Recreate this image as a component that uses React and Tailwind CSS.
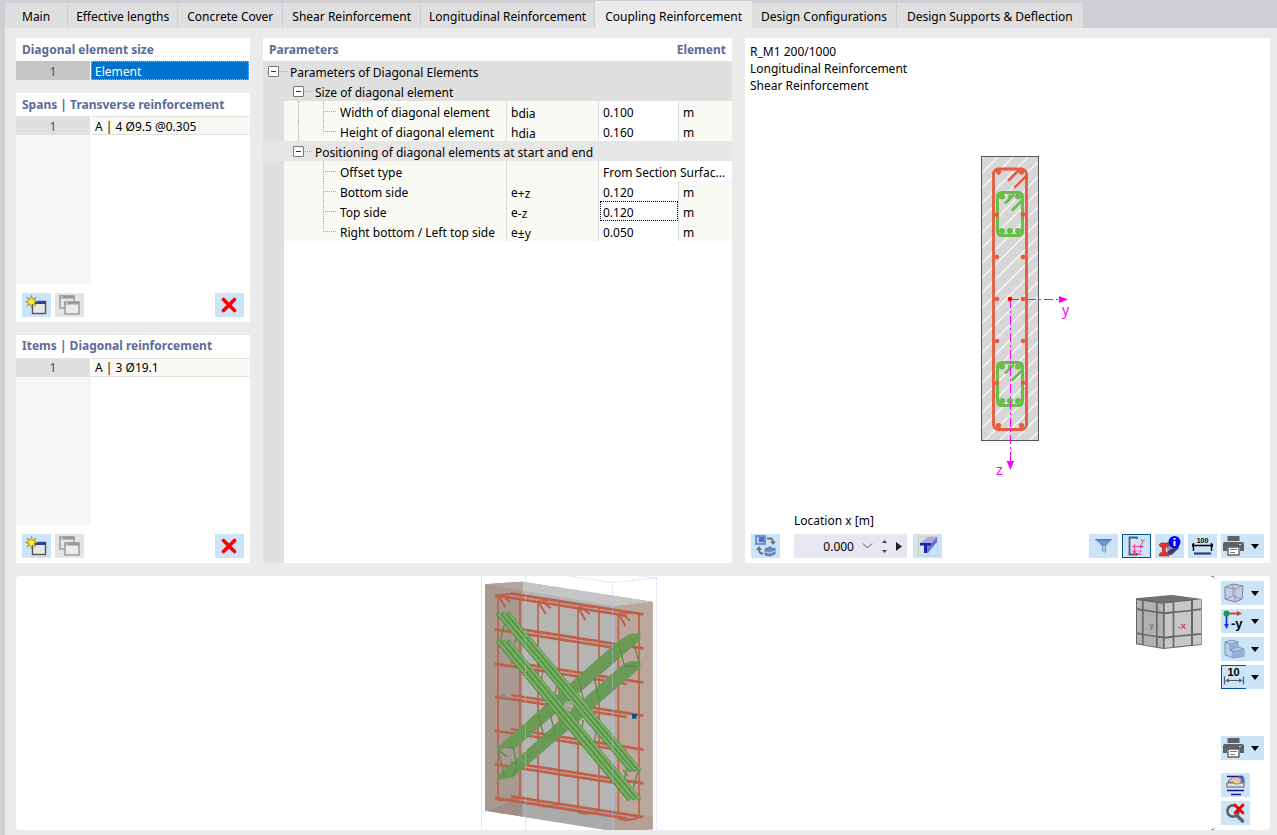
import React from 'react';
import clsx from 'clsx';

const TABS = [
  { label: 'Main', pad: 'px-[17px]' },
  { label: 'Effective lengths', pad: 'px-2' },
  { label: 'Concrete Cover', pad: 'px-[9px]' },
  { label: 'Shear Reinforcement', pad: 'px-[9px]' },
  { label: 'Longitudinal Reinforcement', pad: 'px-2' },
  { label: 'Coupling Reinforcement', pad: 'px-[10px]', active: true },
  { label: 'Design Configurations', pad: 'px-[9px]' },
  { label: 'Design Supports & Deflection', pad: 'px-[10px]' },
];

const GROUPS = [
  {
    label: 'Size of diagonal element',
    shade: 'bg-[#e0e0e0]',
    rows: [
      { label: 'Width of diagonal element', symbol: 'b', sub: 'dia', value: '0.100', unit: 'm' },
      { label: 'Height of diagonal element', symbol: 'h', sub: 'dia', value: '0.160', unit: 'm' },
    ],
  },
  {
    label: 'Positioning of diagonal elements at start and end',
    shade: 'bg-[#e6e6e6]',
    rows: [
      { label: 'Offset type', value: 'From Section Surfac...', wide: true },
      { label: 'Bottom side', symbol: 'e', sub: '+z', value: '0.120', unit: 'm' },
      { label: 'Top side', symbol: 'e', sub: '-z', value: '0.120', unit: 'm', active: true },
      { label: 'Right bottom / Left top side', symbol: 'e', sub: '±y', value: '0.050', unit: 'm' },
    ],
  },
];

/* ---------- icons ---------- */

const NewIcon = () => (
  <svg width="23" height="20" viewBox="0 0 23 20">
    <rect x="7.5" y="6.5" width="13" height="12" fill="#e8e8e8" stroke="#555" strokeWidth="1.4" />
    <rect x="7" y="6" width="14" height="3" fill="#2f3f9f" />
    <path d="M6.500 0.500l1 3.800 3.500-2-2 3.300 3.500 1-3.500 1 2 3.400-3.500-2-1 3.500-1-3.500-3.500 2 2-3.400-3.500-1 3.500-1-2-3.300 3.500 2z" fill="#fff020" stroke="#8a8420" strokeWidth=".7" />
  </svg>
);

const CopyIcon = () => (
  <svg width="21" height="20" viewBox="0 0 21 20">
    <rect x="1" y="1" width="14" height="12" fill="#e6e6e6" stroke="#999" strokeWidth="1.400" />
    <rect x="0.500" y="0.500" width="15" height="3" fill="#999" />
    <rect x="6" y="7" width="14" height="12" fill="#ececec" stroke="#999" strokeWidth="1.400" />
    <rect x="5.500" y="6.500" width="15" height="3" fill="#999" />
    <path d="M2 2h1.500M7 8h1.500" stroke="#fff" />
  </svg>
);

const DeleteIcon = () => (
  <svg width="17" height="16" viewBox="0 0 17 16">
    <path d="M2.500 2.500l11 11M13.500 2.500l-11 11" stroke="#fe0000" strokeWidth="3.600" strokeLinecap="round" />
  </svg>
);

const SwapIcon = () => (
  <svg width="22" height="22" viewBox="0 0 22 22">
    <rect x="1" y="1" width="9" height="8" fill="#b9cff5" stroke="#5b84cf" strokeWidth="1.600" />
    <rect x="4" y="2" width="5" height="5" fill="#4a73c8" />
    <path d="M12 3.500h3q3 0 3 4" fill="none" stroke="#66707c" strokeWidth="1.800" />
    <path d="M15 6.500h6L18 10z" fill="#66707c" />
    <path d="M8 18.500H7q-3 0-3-5" fill="none" stroke="#66707c" strokeWidth="1.800" />
    <path d="M1 15h6l-3-4z" fill="#66707c" />
    <path d="M10 14l6-2.500V14l4-1v6l-5 2-5-1z" fill="#6c8cc0" stroke="#4c6795" strokeWidth=".8" />
    <path d="M10 17l5 1 5-2" stroke="#c5d6f0" fill="none" />
  </svg>
);

const BeamIcon = () => (
  <svg width="22" height="22" viewBox="0 0 22 22">
    <rect x="1.500" y="1.500" width="19" height="19" fill="none" stroke="#edc9a0" />
    <path d="M3 8l8-6h9l-6 6z" fill="#a7a8ee" />
    <path d="M14 8l6-6v5l-9 11h-1v-8h4z" fill="#6d72d8" />
    <path d="M3 8h11v2.500h-4V18H7v-7.500H3z" fill="#22229a" />
  </svg>
);

const FunnelIcon = () => (
  <svg width="20" height="18" viewBox="0 0 20 18">
    <path d="M1 2h17l-6 7v7l-4-2V9z" fill="#6f96c4" />
    <path d="M9 9h2v6l-2-1z" fill="#b3cbe6" />
    <path d="M1 2h17l-1 1.500H2z" fill="#4f7cb0" />
  </svg>
);

const AxesIcon = () => (
  <svg width="21" height="20" viewBox="0 0 21 20">
    <path d="M11 3V1.500H3.500v17H11V17" fill="none" stroke="#575a72" strokeWidth="1.800" />
    <path d="M6 10.500h9M8.500 8v8" stroke="#ee4f93" fill="none" strokeWidth="1.200" />
    <path d="M14 8l4 2.500-4 2.500zM6 14.500h5L8.500 19z" fill="#ee4f93" />
    <path d="M15 3l1.500 3M18.500 3l-3 5M12 15h3.500L12 18.500h4" stroke="#ee4f93" fill="none" />
  </svg>
);

const InfoBeamIcon = () => (
  <svg width="23" height="22" viewBox="0 0 23 22">
    <path d="M8 8l7-4 6 4v5l-7 7h-4z" fill="#8492bd" />
    <path d="M9 17l9-6 3 2-8 7z" fill="#343f70" />
    <path d="M1.500 9l2-1h6l1 1v2L7.300 12.500V17l3.700 1.500V21H1.500v-2.500L4.500 17v-4.500L1.500 11z" fill="#f03030" stroke="#8c1515" strokeWidth=".6" />
    <circle cx="16.500" cy="7" r="6" fill="#0000fb" />
    <path d="M16.500 6v5M16.500 3v1.800" stroke="#fff" strokeWidth="2" />
  </svg>
);

const DimensionIcon = () => (
  <svg width="23" height="20" viewBox="0 0 23 20">
    <text x="11.500" y="7" textAnchor="middle" fontSize="7" fontWeight="700" fontFamily="Liberation Sans, sans-serif">100</text>
    <path d="M2.500 7v8M20.500 7v8M3 9.500h17" stroke="#000" strokeWidth="1.400" />
    <path d="M1 8l4 1.500L1 11zM22 8l-4 1.500L22 11z" />
    <path d="M3 17.500h17" stroke="#343c7c" strokeWidth="2.200" />
  </svg>
);

const PrinterIcon = () => (
  <svg width="21" height="20" viewBox="0 0 21 20">
    <path d="M4.500 0h12v5h-12z" fill="#606164" />
    <path d="M2 6h17q2 0 2 2v7h-4v-4H4v4H0V8q0-2 2-2z" fill="#606164" />
    <path d="M5 11h11v8H5z" fill="#fff" stroke="#606164" strokeWidth="1.400" />
    <path d="M7 13.500h7M7 16.500h5" stroke="#777" />
    <path d="M16 8.500h2" stroke="#cce4f7" strokeWidth="1.200" />
  </svg>
);

const CubeIcon = () => (
  <svg width="22" height="20" viewBox="0 0 22 20">
    <path d="M2 4l8-3 10 2-1 13-7 3-10-3z" fill="#c6cce4" stroke="#747799" strokeWidth=".9" />
    <path d="M2 4l10 2 8-3M12 6v13M10 1v12l-8 3M10 13l9 3" fill="none" stroke="#8f92b3" strokeWidth=".9" />
  </svg>
);

const AxisViewIcon = () => (
  <svg width="22" height="22" viewBox="0 0 22 22">
    <path d="M3 3.500h12" stroke="#d33f0a" strokeWidth="1.800" />
    <path d="M14 1l5 2.500L14 6z" fill="#d33f0a" />
    <path d="M3.500 5v10" stroke="#1536ef" strokeWidth="1.800" />
    <path d="M1 14h5l-2.500 5z" fill="#1536ef" />
    <circle cx="3.500" cy="3.500" r="3" fill="#0aa050" />
    <text x="8" y="18" fontSize="13" fontWeight="700" fontFamily="Liberation Sans, sans-serif">-y</text>
  </svg>
);

const StepsIcon = () => (
  <svg width="22" height="22" viewBox="0 0 22 22">
    <path d="M2 4l7-2 6 2v5l6 2v7l-10 2-9-3z" fill="#b9d0ea" stroke="#6685ad" strokeWidth=".8" />
    <path d="M2 4l5 2 8-2M7 6v6l8-3M7 12l3 1.500 11-2.500M10 13.500V20" fill="none" stroke="#6685ad" strokeWidth=".8" />
    <path d="M7 6l8-2v5l-8 3zM10 13.500l11-2.500v7l-10 2z" fill="#94b0d4" />
  </svg>
);

const TenIcon = () => (
  <svg width="22" height="22" viewBox="0 0 22 22">
    <text x="10.500" y="10" textAnchor="middle" fontSize="11" fontWeight="700" fontFamily="Liberation Sans, sans-serif">10</text>
    <path d="M1.500 10.500v8M20.500 10.500v8M3 14.500h16" stroke="#555c66" strokeWidth="1.200" />
    <path d="M2 14.500l4-2v4zM20 14.500l-4-2v4z" fill="#555c66" />
  </svg>
);

const SurfaceHandIcon = () => (
  <svg width="22" height="22" viewBox="0 0 22 22">
    <path d="M2 2.500h16M3 7.500h4" stroke="#141494" strokeWidth="1.600" />
    <rect x="2" y="9" width="17" height="4" fill="#dfe3ea" stroke="#777" strokeWidth="1.200" />
    <path d="M14 2l5 1 1 5-4 1z" fill="#4a72ca" />
    <path d="M4 6q3-3 8-3l4 2q1 4-2 5l-4 0-2-2H4z" fill="#e6c3a8" stroke="#94725e" strokeWidth=".8" />
    <path d="M2 16.500h17M6 20.500h10" stroke="#141494" strokeWidth="1.600" />
  </svg>
);

const SearchOffIcon = () => (
  <svg width="22" height="22" viewBox="0 0 22 22">
    <circle cx="8" cy="9" r="5.600" fill="none" stroke="#606164" strokeWidth="2.600" />
    <path d="M12.500 14l5 5" stroke="#606164" strokeWidth="3.400" strokeLinecap="round" />
    <path d="M10 3l8 8M18 3l-8 8" stroke="#f00000" strokeWidth="2.800" strokeLinecap="round" />
  </svg>
);

/* ---------- small controls ---------- */

const IconButton = ({ label, muted, pressed, children }) => (
  <button
    type="button"
    aria-label={label}
    className={clsx(
      'flex h-6 w-[29px] items-center justify-center',
      muted ? 'bg-[#e4e4e4]' : 'bg-[#cce4f7]',
      pressed && 'border border-[#005499]',
    )}
  >
    {children}
  </button>
);

const MenuButton = ({ label, pressed, children }) => (
  <button type="button" aria-label={label} className="flex h-6 w-[43px] items-center bg-[#cce4f7]">
    <span
      className={clsx(
        'flex h-full w-[25px] items-center justify-center',
        pressed && 'border border-r-0 border-[#005499]',
      )}
    >
      {children}
    </span>
    <svg className="ml-[5px]" width="8" height="5" viewBox="0 0 8 5">
      <path d="M0 0h8L4 5z" />
    </svg>
  </button>
);

const PanelTitle = ({ children }) => (
  <h2 className="flex h-[23px] shrink-0 items-center justify-between px-[6px] text-[12px] font-bold text-[#5c6b97]">
    {children}
  </h2>
);

const ListPanel = ({ title, entry, selected }) => (
  <section className={clsx('flex flex-col bg-white', !selected && 'min-h-[228px] flex-1')}>
    <PanelTitle>{title}</PanelTitle>
    <ul>
      <li className="flex h-[19px] items-stretch">
        <span
          className={clsx(
            'flex w-[74px] items-center justify-center pt-0.5 text-[#3f4c76]',
            selected ? 'bg-[#c6c6c6]' : 'bg-[#e0e0e0]',
          )}
        >
          1
        </span>
        <span
          className={clsx(
            'ml-px flex flex-1 items-center border px-[3px] pt-0.5',
            selected
              ? 'mr-px border-dotted border-[#f0a060] bg-[#0073cf] text-white'
              : 'border-x-transparent border-y-[#e0e0e0] bg-[#f9faf4]',
          )}
        >
          {entry}
        </span>
      </li>
    </ul>
    {!selected && (
      <>
        <div className="w-[75px] flex-1 bg-[#f6f6f6]"></div>
        <div className="flex h-[38px] gap-1 px-[6px] pt-[9px]">
          <IconButton label="New">
            <NewIcon />
          </IconButton>
          <IconButton label="Copy" muted>
            <CopyIcon />
          </IconButton>
          <span className="flex-1"></span>
          <IconButton label="Delete">
            <DeleteIcon />
          </IconButton>
        </div>
      </>
    )}
  </section>
);

/* ---------- parameter tree ---------- */

const Toggle = ({ label }) => (
  <>
    <button
      type="button"
      aria-label={`Collapse ${label}`}
      className="flex h-[11px] w-[11px] items-center justify-center rounded-[1px] border border-[#767676] bg-white"
    >
      <span className="h-px w-[5px] bg-[#333]"></span>
    </button>
    <span className="mr-[3px] ml-px w-[7px] border-t border-dotted border-[#aaa]"></span>
  </>
);

const ParameterRow = ({ row, last, nested }) => (
  <tr className="h-5">
    <td className="bg-[#e0e0e0]"></td>
    <td className="bg-[#f9faf4]">
      <div className="flex h-5 items-center pl-[14px]">
        <span className={clsx('h-5 w-[25px]', nested && 'border-l border-dotted border-[#aaa]')}></span>
        <span className="flex h-5 w-[13px] flex-col">
          <span className="h-[11px] border-b border-l border-dotted border-[#aaa]"></span>
          {!last && <span className="flex-1 border-l border-dotted border-[#aaa]"></span>}
        </span>
        <span className="ml-1 pt-[3px] whitespace-nowrap">{row.label}</span>
      </div>
    </td>
    <td className="border-l border-[#dcdcdc] bg-[#f9faf4] px-1 pt-[3px]">
      <div className="h-4">
        {row.symbol}
        {row.sub && <sub className="static align-[-1px] text-[12px] leading-none">{row.sub}</sub>}
      </div>
    </td>
    {row.wide ? (
      <td colSpan={2} className="border-l border-[#dcdcdc] bg-white px-1 pt-[3px] whitespace-nowrap">
        {row.value}
      </td>
    ) : (
      <>
        <td className="border-l border-[#dcdcdc] bg-white pl-px">
          <input
            aria-label={row.label}
            defaultValue={row.value}
            className={clsx(
              'block h-5 w-full border px-[2px] pt-0.5 outline-none',
              row.active ? 'border-dotted border-black' : 'border-transparent',
            )}
          />
        </td>
        <td className="border-l border-[#dcdcdc] bg-[#f9faf4] px-1 pt-[3px]">{row.unit}</td>
      </>
    )}
  </tr>
);

const ParametersPanel = () => (
  <section className="flex w-[469px] shrink-0 flex-col bg-white">
    <PanelTitle>
      <span>Parameters</span>
      <span>Element</span>
    </PanelTitle>
    <table className="w-full table-fixed border-separate border-spacing-0 text-[12px] leading-4">
      <colgroup>
        <col className="w-[21px]" />
        <col className="w-[222px]" />
        <col className="w-[92px]" />
        <col className="w-[80px]" />
        <col />
      </colgroup>
      <tbody>
        <tr className="h-5 bg-[#e0e0e0]">
          <td colSpan={5}>
            <div className="flex h-5 items-center pl-[5px]">
              <Toggle label="Parameters of Diagonal Elements" />
              <span className="pt-[3px]">Parameters of Diagonal Elements</span>
            </div>
          </td>
        </tr>
        {GROUPS.map((group, groupIndex) => (
          <React.Fragment key={group.label}>
            <tr className={clsx('h-5', group.shade)}>
              <td colSpan={5}>
                <div className="flex h-5 items-center pl-[30px]">
                  <Toggle label={group.label} />
                  <span className="pt-[3px]">{group.label}</span>
                </div>
              </td>
            </tr>
            {group.rows.map((row, index) => (
              <ParameterRow
                key={row.label}
                row={row}
                nested={groupIndex < GROUPS.length - 1}
                last={index === group.rows.length - 1}
              />
            ))}
          </React.Fragment>
        ))}
      </tbody>
    </table>
    <div className="w-[21px] flex-1 bg-[#e0e0e0]"></div>
  </section>
);

/* ---------- cross section ---------- */

const GreenTie = ({ y }) => (
  <g stroke="#69bd49" fill="none">
    <rect x="997.500" y={y} width="25" height="43" rx="4" strokeWidth="3" />
    <path d={`M1014 ${y + 2}l-9 9M1022 ${y + 8}l-10 10`} strokeWidth="2.600" />
    <g fill="#69bd49" stroke="none">
      {[1002, 1010, 1018].map((x) => (
        <g key={x}>
          <circle cx={x} cy={y + 4} r={x === 1010 ? 2 : 3} />
          <circle cx={x} cy={y + 38.5} r="3" />
        </g>
      ))}
    </g>
  </g>
);

const SectionDrawing = () => (
  <svg width="145" height="335" viewBox="935 150 145 335">
    <defs>
      <pattern id="hatch" width="15" height="15" patternUnits="userSpaceOnUse">
        <rect width="15" height="15" fill="#d7d7d7" />
        <path d="M-1 16L16 -1M-1 1L1 -1M14 16L16 14" stroke="#fff" strokeWidth="1.100" />
      </pattern>
    </defs>
    <rect x="981.500" y="156.500" width="57" height="284" fill="url(#hatch)" stroke="#555" />
    <rect x="993.500" y="169" width="33" height="260.500" rx="5" fill="none" stroke="#e85a3a" strokeWidth="2.800" />
    <path d="M1018 171l-9 9M1026 176l-11 11" stroke="#e85a3a" strokeWidth="2.500" strokeLinecap="round" />
    <GreenTie y={192.5} />
    <GreenTie y={362.5} />
    <g fill="#e85a3a">
      {[214.5, 257, 299, 341, 383].map((y) => (
        <g key={y}>
          <circle cx="997" cy={y} r="2.300" />
          <circle cx="1023" cy={y} r="2.300" />
        </g>
      ))}
      <circle cx="998.500" cy="172" r="2.600" />
      <circle cx="1021.500" cy="172" r="2.600" />
      <circle cx="998.500" cy="425.500" r="2.600" />
      <circle cx="1021.500" cy="425.500" r="2.600" />
    </g>
    <path d="M1010 299.500h48M1010.500 299v162" stroke="#ff00ff" strokeDasharray="9 3 2 3" />
    <path d="M1059 296l9 3.500-9 3.500zM1006.500 461h7.500l-3.500 9z" fill="#ff00ff" />
    <circle cx="1010" cy="299" r="2.300" fill="#f00" />
    <g fill="#ff00ff" fontSize="14" fontFamily="Noto Sans, sans-serif">
      <text x="1062" y="315">y</text>
      <text x="996" y="475">z</text>
    </g>
  </svg>
);

const SectionPanel = () => (
  <section className="flex min-w-0 flex-1 flex-col bg-white">
    <div className="px-[5px] pt-[5px] leading-[17px]">
      <p>R_M1 200/1000</p>
      <p>Longitudinal Reinforcement</p>
      <p>Shear Reinforcement</p>
    </div>
    <div className="flex flex-1 justify-center pt-14">
      <SectionDrawing />
    </div>
    <label htmlFor="location" className="pb-[5px] pl-[49px]">
      Location x [m]
    </label>
    <div className="flex items-center gap-1 px-[6px] pb-[5px]">
      <IconButton label="Switch view">
        <SwapIcon />
      </IconButton>
      <div className="mr-[2px] ml-[10px] flex h-6 w-[113px] items-center bg-[#e7e7f1]">
        <input
          id="location"
          defaultValue="0.000"
          className="w-[60px] bg-transparent pt-px text-right outline-none"
        />
        <button type="button" aria-label="Choose location" className="ml-2">
          <svg width="11" height="6" viewBox="0 0 11 6">
            <path d="M1 .5l4.500 4.500L10 .5" fill="none" stroke="#555" />
          </svg>
        </button>
        <span className="ml-[9px] flex flex-col gap-[7px]">
          <button type="button" aria-label="Increase">
            <svg className="block" width="5" height="3" viewBox="0 0 5 3">
              <path d="M0 3h5L2.500 0z" fill="#444" />
            </svg>
          </button>
          <button type="button" aria-label="Decrease">
            <svg className="block" width="5" height="3" viewBox="0 0 5 3">
              <path d="M0 0h5L2.500 3z" fill="#444" />
            </svg>
          </button>
        </span>
        <button type="button" aria-label="Next location" className="ml-[9px]">
          <svg className="block" width="6" height="9" viewBox="0 0 6 9">
            <path d="M0 0v9l6-4.500z" fill="#222" />
          </svg>
        </button>
      </div>
      <IconButton label="Show member">
        <BeamIcon />
      </IconButton>
      <span className="flex-1"></span>
      <IconButton label="Filter">
        <FunnelIcon />
      </IconButton>
      <IconButton label="Show axes" pressed>
        <AxesIcon />
      </IconButton>
      <IconButton label="Section info">
        <InfoBeamIcon />
      </IconButton>
      <IconButton label="Dimensions">
        <DimensionIcon />
      </IconButton>
      <MenuButton label="Print section">
        <PrinterIcon />
      </MenuButton>
    </div>
  </section>
);

/* ---------- 3D model ---------- */

const STIRRUPS = [
  [84, 75, 690],
  [150, 75, 682],
  [204, 95, 706],
  [267, 92, 703],
  [324, 112, 727],
  [387, 108, 724],
  [445, 132, 748],
  [507, 130, 742],
];

const BAR_ROWS = [76, 178, 281, 380, 482, 583, 684];

const WallModel = () => (
  <g>
    <g transform="translate(470 570) scale(.33333)">
      <path d="M45 43L157 35L548 95V778L435 784L45 722z" fill="#b5b5b4" />
      <path d="M157 35L548 95L435 109L157 61z" fill="#c4c5c4" />
      <path d="M157 682L435 722V784L157 740z" fill="#a9aaa9" />
      <path d="M45 43L157 35V682L45 722z" fill="#a89991" />
      <path d="M45 43L157 61V35z" fill="#b3a69f" />
      <path d="M45 722L157 682V740z" fill="#9f8f88" />
      <path d="M435 109L548 95V778L435 784z" fill="#baa79d" />
      <path d="M435 722L548 740V778L435 784z" fill="#b49f95" />

      <g stroke="#bf604b" fill="none">
        {STIRRUPS.map(([x, top, bottom]) => (
          <path key={x} d={`M${x} ${top}V${bottom}`} strokeWidth="5" />
        ))}
        {BAR_ROWS.map((y) => (
          <g key={y} strokeWidth="8">
            <path d={`M74 ${y}L470 ${y + 61}`} />
            <path d={`M123 ${y - 5}L520 ${y + 57}`} />
          </g>
        ))}
        <path
          d="M84 75l22 37M95 74l26 22M84 78q10-8 66-6M205 95l22 37M220 97l22 18M205 95q15-8 60-4M325 113l21 38M338 116l22 17M325 112q15-6 60-2M446 132l20 36M460 134l20 18M446 132q15-6 60-3"
          strokeWidth="6"
        />
        <path
          d="M84 688q10 6 66-4M205 705q10 8 60-1M325 727q10 8 60-2M446 746q10 8 60-2"
          strokeWidth="6"
        />
      </g>
      <g stroke="#cf8976" strokeDasharray="15 6" strokeWidth="2">
        {BAR_ROWS.map((y) => (
          <path key={y} d={`M125 ${y + 2}L470 ${y + 56}`} />
        ))}
      </g>

      {/* rear diagonal */}
      <g fill="#6b9a58">
        <path d="M80 534L445 212L480 192L511 188V210L130 540L108 532L85 545z" />
        <path d="M80 620L452 288L480 274L511 274V293L130 622L84 630z" />
      </g>
      <g stroke="#5a8d47" strokeWidth="4" fill="none">
        <path d="M85 540l18 78M110 532h20l12 66-16 20M85 542l26 18M204 432l18 66M240 430l16 62-30 8M324 322l16 66M372 322l16 66M444 220l20 68h40M490 215l18 66M104 160L90 215M145 170l-10 50" />
        <path d="M218 308l-12 60M262 342l-12 50M340 450l-8 50M385 458l-12 55M470 598l-12 50M504 602l-14 52M460 600l14 18" />
      </g>

      {/* front diagonal */}
      <g strokeLinecap="round">
        <g stroke="#589244" strokeWidth="12">
          <path d="M85 133L480 600M100 131L493 599M116 132L507 598M85 217L475 686M100 215L490 685M116 215L506 685" />
        </g>
        <g stroke="#7ab268" strokeWidth="6">
          <path d="M86 133L481 599M101 131L494 598M117 132L508 597M86 217L476 685M101 215L491 684M117 215L507 684" />
        </g>
      </g>
      <circle cx="296" cy="408" r="15" fill="#9fb8a0" opacity=".7" />
      <path d="M286 405h19M288 414l16-10" stroke="#cc9bb0" strokeWidth="3" />
      <path d="M93 372h14v13H93z" fill="#7f8d97" />
      <path d="M486 432h14v14h-14z" fill="#07578d" />
    </g>
    <path
      d="M481.500 576V830M525.500 576V830M612.500 582V830M656.500 578V830M570 576L611 582.500L657 578L638 576"
      fill="none"
      stroke="#c0c0f2"
      strokeDasharray="1 1.500"
    />
  </g>
);

const NavigatorCube = () => (
  <g transform="translate(1120 575) scale(.33333)">
    <path d="M48 70L155 60L245 72V210L130 222L48 208z" fill="#676767" />
    <path d="M58 70L155 62L236 72L130 81z" fill="#747373" />
    <g fill="#b2b2b2">
      <path d="M51 74l15 4v24l-15-3zM71 78l37 5v26l-37-6zM113 84l16 2v25l-16-2z" />
      <path d="M51 104l15 4v67l-15-3zM71 108l37 6v68l-37-6zM113 115l16 2v67l-16-2z" />
      <path d="M51 177l15 3v28l-15-3zM71 181l37 6v28l-37-6zM113 188l16 2v28l-16-2z" />
    </g>
    <g fill="#c8c8c8">
      <path d="M134 85l24-2v26l-24 3zM163 82l50-5v27l-50 5zM219 76l24-3v27l-24 3z" />
      <path d="M134 118l24-3v67l-24 3zM163 114l50-5v68l-50 5zM219 108l24-3v69l-24 2z" />
      <path d="M134 191l24-3v28l-24 3zM163 187l50-5v28l-50 5zM219 182l24-3v29l-24 2z" />
    </g>
    <g fontSize="24" fontWeight="700" fontFamily="Liberation Sans, sans-serif">
      <text x="88" y="159" fill="#4ba04b">y</text>
      <text x="174" y="161" fill="#d9403c">-X</text>
    </g>
  </g>
);

const ModelPanel = () => (
  <section className="flex min-h-[254px] flex-1 rounded-sm bg-white pr-[6px]">
    <div className="min-w-0 flex-1">
      <svg className="block h-full w-full" viewBox="16 576 1199 254" role="img" aria-label="3D model">
        <WallModel />
        <NavigatorCube />
        <path d="M1211 576.500h3v2M1211 829.500h3v-2" fill="none" stroke="#999" />
      </svg>
    </div>
    <div className="ml-[6px] flex flex-col pt-[5px] pb-[5px]">
      <div className="flex flex-col gap-1">
        <MenuButton label="View direction">
          <CubeIcon />
        </MenuButton>
        <MenuButton label="Axis view">
          <AxisViewIcon />
        </MenuButton>
        <MenuButton label="Rendering">
          <StepsIcon />
        </MenuButton>
        <MenuButton label="Show dimensions" pressed>
          <TenIcon />
        </MenuButton>
      </div>
      <span className="flex-1"></span>
      <MenuButton label="Print model">
        <PrinterIcon />
      </MenuButton>
      <div className="mt-[13px] flex flex-col gap-1">
        <IconButton label="Surface settings">
          <SurfaceHandIcon />
        </IconButton>
        <IconButton label="Reset zoom">
          <SearchOffIcon />
        </IconButton>
      </div>
    </div>
  </section>
);

const App = () => {
  return (
    <div className="flex min-h-screen flex-col bg-[#d0cfd5] pl-[5px] font-['Noto_Sans',sans-serif] text-[12px] leading-4 text-black">
      <nav className="flex items-end pt-px">
        {TABS.map((tab) => (
          <button
            key={tab.label}
            type="button"
            className={clsx(
              'whitespace-nowrap',
              tab.pad,
              tab.active
                ? 'h-[27px] bg-[#ebebeb] pt-1'
                : 'h-[25px] border-r border-[#d0cfd5] bg-[#dfdfdf] pt-0.5',
            )}
          >
            {tab.label}
          </button>
        ))}
      </nav>
      <main className="flex flex-1 flex-col gap-[13px] bg-[#ebebeb] pt-[10px] pr-[7px] pb-[5px] pl-[11px]">
        <div className="flex min-h-[525px] gap-[13px]">
          <div className="flex w-[234px] shrink-0 flex-col gap-[13px]">
            <ListPanel title="Diagonal element size" entry="Element" selected />
            <ListPanel title="Spans | Transverse reinforcement" entry="A | 4 Ø9.5 @0.305" />
            <ListPanel title="Items | Diagonal reinforcement" entry="A | 3 Ø19.1" />
          </div>
          <ParametersPanel />
          <SectionPanel />
        </div>
        <ModelPanel />
      </main>
    </div>
  );
};

export default App;
